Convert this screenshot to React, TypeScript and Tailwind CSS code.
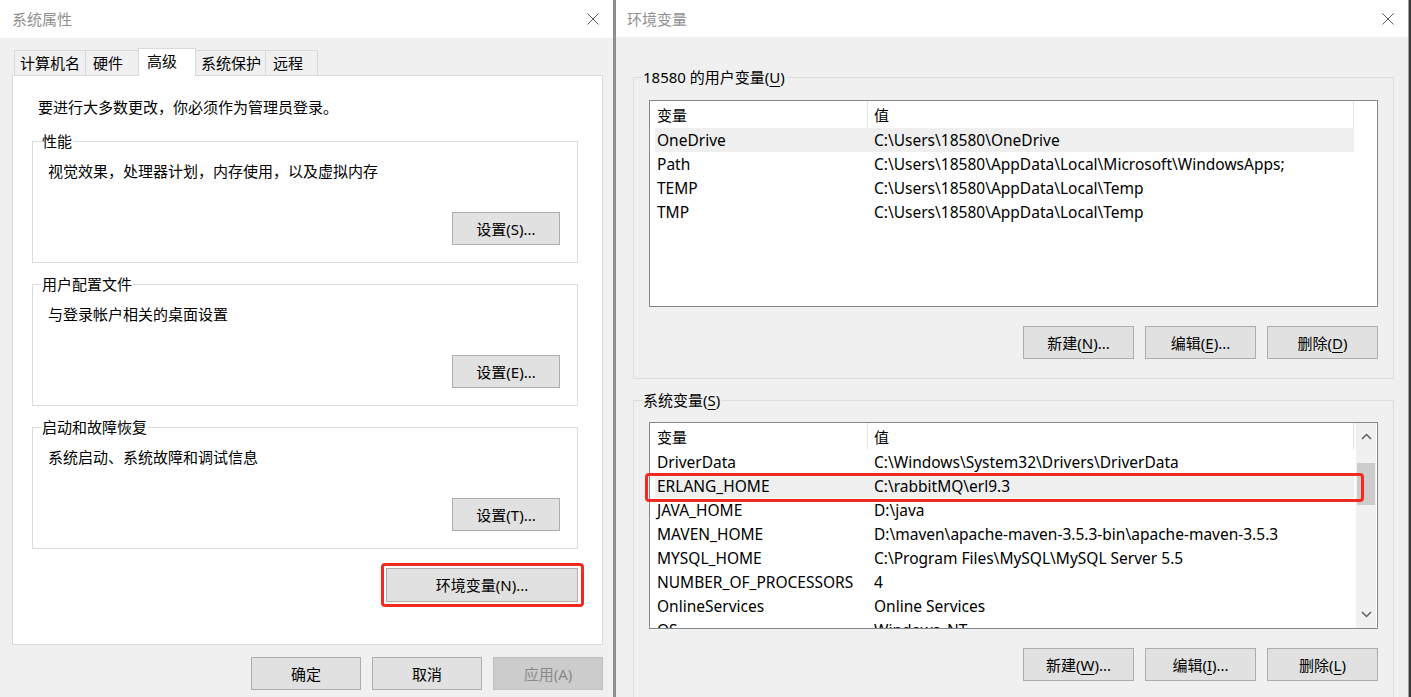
import React from "react";

const CloseX = () => (
  <svg width="12" height="12" viewBox="0 0 12 12">
    <path d="M0.5 0.5 L11.5 11.5 M11.5 0.5 L0.5 11.5" stroke="#5a5a5a" strokeWidth="1" fill="none" />
  </svg>
);

const U = ({ children }: { children: React.ReactNode }) => (
  <span className="underline underline-offset-[3px] decoration-1">{children}</span>
);

function Btn({ children, className }: { children: React.ReactNode; className: string }) {
  return (
    <div className={`flex items-center justify-center bg-[#e1e1e1] border border-[#adadad] text-black ${className}`}>
      {children}
    </div>
  );
}

function Group({ title, children }: { title: React.ReactNode; children: React.ReactNode }) {
  return (
    <fieldset className="border border-[#dcdcdc] w-[546px]">
      <legend className="ml-[8px] px-[1px] h-[20px] leading-[20px]">{title}</legend>
      {children}
    </fieldset>
  );
}

function SettingsGroup({ title, desc, btn }: { title: string; desc: string; btn: React.ReactNode }) {
  return (
    <Group title={title}>
      <div className="h-[111px] pt-[10px] pl-[15px] pr-[17px] pb-[17px] flex flex-col justify-between">
        <div className="h-[20px] leading-[20px]">{desc}</div>
        <Btn className="self-end w-[108px] h-[33px]">{btn}</Btn>
      </div>
    </Group>
  );
}

type Row = [string, string, boolean?];

const userRows: Row[] = [
  ["OneDrive", "C:\\Users\\18580\\OneDrive", true],
  ["Path", "C:\\Users\\18580\\AppData\\Local\\Microsoft\\WindowsApps;"],
  ["TEMP", "C:\\Users\\18580\\AppData\\Local\\Temp"],
  ["TMP", "C:\\Users\\18580\\AppData\\Local\\Temp"],
];

const sysRows: Row[] = [
  ["DriverData", "C:\\Windows\\System32\\Drivers\\DriverData"],
  ["ERLANG_HOME", "C:\\rabbitMQ\\erl9.3", true],
  ["JAVA_HOME", "D:\\java"],
  ["MAVEN_HOME", "D:\\maven\\apache-maven-3.5.3-bin\\apache-maven-3.5.3"],
  ["MYSQL_HOME", "C:\\Program Files\\MySQL\\MySQL Server 5.5"],
  ["NUMBER_OF_PROCESSORS", "4"],
  ["OnlineServices", "Online Services"],
  ["OS", "Windows_NT"],
];

function ListView({ rows, scroll }: { rows: Row[]; scroll: boolean }) {
  return (
    <div className="w-[729px] h-[207px] border border-[#828790] bg-white flex overflow-hidden">
      <div className="flex-1 flex flex-col">
        <div className="w-[704px] h-[27px] flex shrink-0">
          <div className="w-[218px] border-r border-[#e5e5e5] pl-[7px] flex items-center">变量</div>
          <div className="flex-1 border-r border-[#e5e5e5] pl-[6px] flex items-center">值</div>
        </div>
        {rows.map(([k, v, sel]) => (
          <div
            key={k}
            className={`ml-[5px] w-[699px] h-[24px] shrink-0 flex items-center whitespace-nowrap text-[15.5px] ${sel ? "bg-[#efefef]" : ""}`}
          >
            <div className="w-[212px] pl-[2px]">{k}</div>
            <div className="pl-[7px]">{v}</div>
          </div>
        ))}
      </div>
      {scroll ? (
        <div className="w-[20px] mr-[1px] bg-[#f0f0f0] flex flex-col items-center">
          <div className="h-[26px] flex items-center justify-center pt-[1px]">
            <svg width="11" height="7" viewBox="0 0 11 7">
              <path d="M1 6 L5.5 1.5 L10 6" stroke="#606060" strokeWidth="1.5" fill="none" />
            </svg>
          </div>
          <div className="mt-[14px] w-[18px] h-[42px] bg-[#cdcdcd]" />
          <div className="flex-1" />
          <div className="h-[24px] flex items-center justify-center pb-[4px]">
            <svg width="11" height="7" viewBox="0 0 11 7">
              <path d="M1 1 L5.5 5.5 L10 1" stroke="#606060" strokeWidth="1.5" fill="none" />
            </svg>
          </div>
        </div>
      ) : (
        <div className="w-[21px]" />
      )}
    </div>
  );
}

function EnvGroup({
  title,
  rows,
  scroll,
  btns,
  annotate,
  pb,
}: {
  title: React.ReactNode;
  rows: Row[];
  scroll: boolean;
  btns: React.ReactNode[];
  annotate: boolean;
  pb: string;
}) {
  return (
    <fieldset className="border border-[#dcdcdc] w-[761px]">
      <legend className="ml-[8px] px-[1px] h-[20px] leading-[20px]">{title}</legend>
      <div className={`pl-[15px] pr-[15px] ${pb}`}>
        <div className="relative">
          <ListView rows={rows} scroll={scroll} />
          {annotate && (
            <div className="absolute left-[-4px] top-[51px] w-[719px] h-[29px] border-[3px] border-[#f22a22] rounded-[4px]" />
          )}
        </div>
        <div className="mt-[19px] flex justify-end gap-[11px]">
          {btns.map((b, i) => (
            <Btn key={i} className="w-[111px] h-[33px]">
              {b}
            </Btn>
          ))}
        </div>
      </div>
    </fieldset>
  );
}

export default function App() {
  return (
    <div className="w-[1411px] h-[697px] overflow-hidden flex bg-[#3a3a3a] text-[15px] leading-[20px] text-black font-['Noto_Sans','Noto_Sans_CJK_SC',sans-serif]">
      {/* Left dialog */}
      <div className="w-[613px] h-full flex flex-col bg-[#f0f0f0] shrink-0">
        <div className="h-[38px] bg-white flex items-center justify-between pl-[12px] pr-[14px] shrink-0">
          <span className="text-[#909090]">系统属性</span>
          <CloseX />
        </div>
        <div className="pl-[12px] pr-[10px] pt-[9px]">
          <div className="flex items-end h-[28px] pl-[2px]">
            <div className="w-[72px] h-[25px] border-t border-l border-r border-[#d9d9d9] bg-[#f0f0f0] pl-[5px] flex items-center">计算机名</div>
            <div className="-ml-px w-[54px] h-[25px] border-t border-l border-r border-[#d9d9d9] bg-[#f0f0f0] pl-[7px] flex items-center">硬件</div>
            <div className="-ml-px relative z-10 -mb-px w-[58px] h-[28px] border-t border-l border-r border-[#d9d9d9] bg-white pl-[8px] pb-[3px] flex items-center">高级</div>
            <div className="-ml-px w-[71px] h-[25px] border-t border-l border-r border-[#d9d9d9] bg-[#f0f0f0] pl-[5px] flex items-center">系统保护</div>
            <div className="-ml-px w-[53px] h-[25px] border-t border-l border-r border-[#d9d9d9] bg-[#f0f0f0] pl-[7px] flex items-center">远程</div>
          </div>
          <div className="h-[570px] border border-[#d9d9d9] bg-white pt-[21px] pl-[19px] pr-[25px] flex flex-col">
            <div className="ml-[6px] h-[20px]">要进行大多数更改，你必须作为管理员登录。</div>
            <div className="mt-[14px]">
              <SettingsGroup title="性能" desc="视觉效果，处理器计划，内存使用，以及虚拟内存" btn="设置(S)..." />
            </div>
            <div className="mt-[11px]">
              <SettingsGroup title="用户配置文件" desc="与登录帐户相关的桌面设置" btn="设置(E)..." />
            </div>
            <div className="mt-[11px]">
              <SettingsGroup title="启动和故障恢复" desc="系统启动、系统故障和调试信息" btn="设置(T)..." />
            </div>
            <div className="mt-[19px] self-end -mr-px relative">
              <Btn className="w-[192px] h-[34px]">环境变量(N)...</Btn>
              <div className="absolute left-[-5px] right-[-6px] top-[-5px] bottom-[-5px] border-[3px] border-[#f22a22] rounded-[4px]" />
            </div>
          </div>
          <div className="mt-[12px] flex justify-end gap-[11px]">
            <Btn className="w-[110px] h-[33px]">确定</Btn>
            <Btn className="w-[110px] h-[33px]">取消</Btn>
            <div className="w-[110px] h-[33px] flex items-center justify-center bg-[#cccccc] border border-[#bfbfbf] text-[#8a8a8a]">应用(A)</div>
          </div>
        </div>
      </div>

      <div className="w-[3px] h-full bg-[#8e8e8e] shrink-0" />

      {/* Right dialog */}
      <div className="w-[793px] h-full flex flex-col bg-[#f0f0f0] border-r border-[#a0a0a0] shrink-0">
        <div className="h-[37px] bg-white flex items-center justify-between pl-[11px] pr-[14px] shrink-0">
          <span className="text-[#909090]">环境变量</span>
          <CloseX />
        </div>
        <div className="pl-[17px] pt-[30px]">
          <EnvGroup
            title={
              <>
                18580 的用户变量(<U>U</U>)
              </>
            }
            rows={userRows}
            scroll={false}
            annotate={false}
            pb="pt-[13px] pb-[19px]"
            btns={[
              <>
                新建(<U>N</U>)...
              </>,
              <>
                编辑(<U>E</U>)...
              </>,
              <>
                删除(<U>D</U>)
              </>,
            ]}
          />
          <div className="mt-[11px]">
            <EnvGroup
              title={
                <>
                  系统变量(<U>S</U>)
                </>
              }
              rows={sysRows}
              scroll={true}
              annotate={true}
              pb="pt-[12px] pb-[40px]"
              btns={[
                <>
                  新建(<U>W</U>)...
                </>,
                <>
                  编辑(<U>I</U>)...
                </>,
                <>
                  删除(<U>L</U>)
                </>,
              ]}
            />
          </div>
        </div>
      </div>
    </div>
  );
}
